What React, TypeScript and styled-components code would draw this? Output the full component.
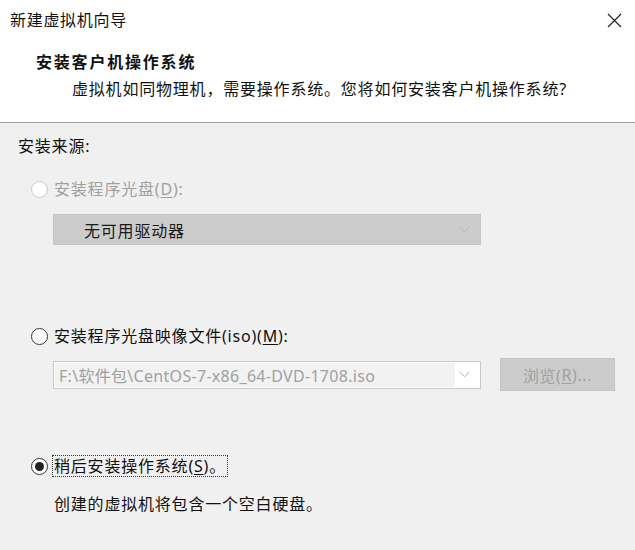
import React from "react";
import styled, { createGlobalStyle } from "styled-components";

const Global = createGlobalStyle`
  html, body { margin: 0; padding: 0; }
  body {
    width: 635px;
    height: 550px;
    overflow: hidden;
    background: #f0f0f0;
    font-family: "Noto Sans", "Noto Sans CJK SC", sans-serif;
    font-size: 16px;
    color: #111;
  }
`;

const Window = styled.div`
  width: 635px;
  height: 550px;
  display: flex;
  flex-direction: column;
  background: #f0f0f0;
`;

const TitleBar = styled.div`
  height: 40px;
  flex: none;
  display: flex;
  align-items: center;
  justify-content: space-between;
  padding: 0 12px 0 10px;
  background: #fff;
  font-size: 16px;
  letter-spacing: 0.7px;
  line-height: 22px;
  color: #111;
`;

const CloseBtn = styled.div`
  width: 18px;
  height: 18px;
  display: flex;
  align-items: center;
  justify-content: center;
`;

const Header = styled.div`
  height: 83px;
  flex: none;
  background: #fff;
  border-bottom: 1px solid #a0a0a0;
  display: flex;
  flex-direction: column;
  padding-top: 11px;
  box-sizing: border-box;
`;

const HeaderTitle = styled.div`
  padding-left: 36px;
  font-weight: 700;
  font-size: 16px;
  letter-spacing: 1.8px;
  line-height: 22px;
`;

const HeaderSub = styled.div`
  margin-top: 5px;
  padding-left: 72px;
  font-size: 16px;
  letter-spacing: 0.8px;
  line-height: 22px;
`;

const Body = styled.div`
  flex: 1;
  display: flex;
  flex-direction: column;
  padding-top: 12px;
`;

const SectionLabel = styled.div`
  padding-left: 18px;
  line-height: 22px;
  letter-spacing: 0.8px;
`;

const RadioRow = styled.div<{ $top: number }>`
  margin-top: ${(p) => p.$top}px;
  padding-left: 31px;
  display: flex;
  align-items: center;
  height: 22px;
`;

const RadioCircle = styled.span<{ $disabled?: boolean; $checked?: boolean }>`
  width: 17px;
  height: 17px;
  border-radius: 50%;
  box-sizing: border-box;
  border: 1.5px solid ${(p) => (p.$disabled ? "#c8c8c8" : "#333")};
  background: #fff;
  flex: none;
  display: flex;
  align-items: center;
  justify-content: center;
  margin-right: 6px;
  &::after {
    content: "";
    display: ${(p) => (p.$checked ? "block" : "none")};
    width: 9px;
    height: 9px;
    border-radius: 50%;
    background: #222;
  }
`;

const RadioLabel = styled.span<{ $disabled?: boolean; $focus?: boolean }>`
  color: ${(p) => (p.$disabled ? "#a0a0a0" : "#111")};
  letter-spacing: 0.8px;
  line-height: 20px;
  padding: 0 1px;
  border: 1px ${(p) => (p.$focus ? "dotted #333" : "solid transparent")};
  margin-left: -2px;
  u { text-decoration: underline; text-underline-offset: 2px; }
`;

const Indented = styled.div<{ $top: number }>`
  margin-top: ${(p) => p.$top}px;
  padding-left: 53px;
  display: flex;
  align-items: center;
`;

const DisabledSelect = styled.div`
  width: 428px;
  height: 31px;
  box-sizing: border-box;
  background: #cccccc;
  border: 1px solid #c4c4c4;
  display: flex;
  align-items: center;
  justify-content: space-between;
  padding: 0 10px 0 30px;
  letter-spacing: 0.8px;
  color: #1a1a1a;
`;

const Combo = styled.div`
  width: 428px;
  height: 28px;
  box-sizing: border-box;
  background: #fff;
  border: 1px solid #c8c8c8;
  display: flex;
  align-items: center;
  padding: 1px 10px 1px 1px;
`;

const ComboField = styled.div`
  width: 400px;
  height: 100%;
  background: #f2f2f2;
  display: flex;
  align-items: center;
  padding-left: 4px;
  box-sizing: border-box;
  color: #a0a0a0;
  font-size: 16px;
  letter-spacing: 0.3px;
  white-space: nowrap;
  overflow: hidden;
`;

const ComboArrow = styled.div`
  margin-left: auto;
  display: flex;
  align-items: center;
`;

const BrowseButton = styled.div`
  margin-left: 19px;
  width: 115px;
  height: 33px;
  box-sizing: border-box;
  background: #cccccc;
  border: 1px solid #c4c4c4;
  display: flex;
  align-items: center;
  justify-content: center;
  color: #a0a0a0;
  letter-spacing: 0.6px;
  u { text-decoration: underline; text-underline-offset: 2px; }
`;

const Description = styled.div`
  margin-top: 16px;
  padding-left: 54px;
  line-height: 22px;
  letter-spacing: 0.8px;
`;

const Chevron = ({ color }: { color: string }) => (
  <svg width="11" height="7" viewBox="0 0 11 7">
    <path d="M0.5 0.8 L5.5 5.8 L10.5 0.8" fill="none" stroke={color} strokeWidth="1" />
  </svg>
);

export default function App() {
  return (
    <>
      <Global />
      <Window>
        <TitleBar>
          <span>新建虚拟机向导</span>
          <CloseBtn>
            <svg width="15" height="15" viewBox="0 0 15 15">
              <path d="M1 1 L14 14 M14 1 L1 14" stroke="#222" strokeWidth="1.2" />
            </svg>
          </CloseBtn>
        </TitleBar>
        <Header>
          <HeaderTitle>安装客户机操作系统</HeaderTitle>
          <HeaderSub>虚拟机如同物理机，需要操作系统。您将如何安装客户机操作系统?</HeaderSub>
        </Header>
        <Body>
          <SectionLabel>安装来源:</SectionLabel>
          <RadioRow $top={21}>
            <RadioCircle $disabled />
            <RadioLabel $disabled>
              安装程序光盘(<u>D</u>):
            </RadioLabel>
          </RadioRow>
          <Indented $top={14}>
            <DisabledSelect>
              <span>无可用驱动器</span>
              <Chevron color="#b4b4b4" />
            </DisabledSelect>
          </Indented>
          <RadioRow $top={80}>
            <RadioCircle />
            <RadioLabel>
              安装程序光盘映像文件(iso)(<u>M</u>):
            </RadioLabel>
          </RadioRow>
          <Indented $top={11}>
            <Combo>
              <ComboField>F:\软件包\CentOS-7-x86_64-DVD-1708.iso</ComboField>
              <ComboArrow>
                <Chevron color="#b0b0b0" />
              </ComboArrow>
            </Combo>
            <BrowseButton>
              浏览(<u>R</u>)...
            </BrowseButton>
          </Indented>
          <RadioRow $top={64}>
            <RadioCircle $checked />
            <RadioLabel $focus>
              稍后安装操作系统(<u>S</u>)。
            </RadioLabel>
          </RadioRow>
          <Description>创建的虚拟机将包含一个空白硬盘。</Description>
        </Body>
      </Window>
    </>
  );
}
